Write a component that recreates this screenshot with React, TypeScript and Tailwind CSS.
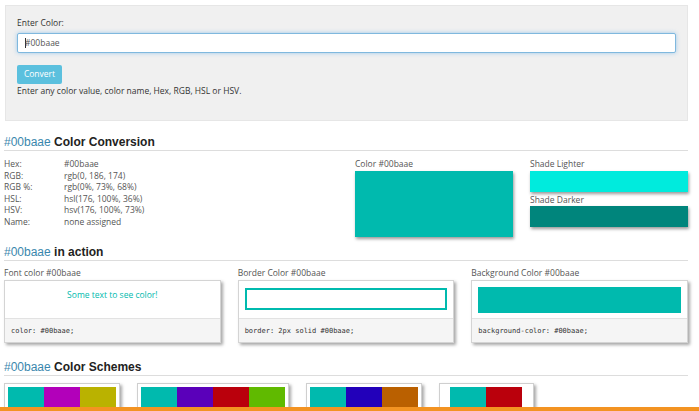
import type { ReactNode } from "react";

const HEX = "#00baae";

function Heading({ children }: { children: ReactNode }) {
  return (
    <h2 className="border-b border-[#dddddd] pb-[1px] font-['Liberation_Sans',Arial,sans-serif] text-[12px] leading-[14px] text-[#222]">
      <span className="text-[#3a87ad]">{HEX}</span> <b>{children}</b>
    </h2>
  );
}

function ActionCard({ title, code, children }: { title: string; code: string; children: ReactNode }) {
  return (
    <div>
      <div className="leading-[12px]">{title}</div>
      <div className="mt-[1px] border border-[#d4d4d4] bg-white shadow-[2px_2px_3px_rgba(0,0,0,0.35)]">
        <div className="h-[37px]">{children}</div>
        <div className="h-[24px] border-t border-[#e2e2e2] bg-[#f5f5f5] px-[6px] font-['DejaVu_Sans_Mono',monospace] text-[7px] leading-[24px] text-[#333]">
          {code}
        </div>
      </div>
    </div>
  );
}

function Scheme({ colors, className = "" }: { colors: string[]; className?: string }) {
  return (
    <div className={`flex h-[40px] border border-[#cfcfcf] bg-white pt-[3px] shadow-[2px_2px_3px_rgba(0,0,0,0.35)] ${className}`}>
      {colors.map((c) => (
        <div key={c} className="h-full w-[36px]" style={{ backgroundColor: c }} />
      ))}
    </div>
  );
}

const rows: [string, string][] = [
  ["Hex:", "#00baae"],
  ["RGB:", "rgb(0, 186, 174)"],
  ["RGB %:", "rgb(0%, 73%, 68%)"],
  ["HSL:", "hsl(176, 100%, 36%)"],
  ["HSV:", "hsv(176, 100%, 73%)"],
  ["Name:", "none assigned"],
];

export default function App() {
  return (
    <div className="relative h-[411px] w-[699px] overflow-hidden bg-white font-['Open_Sans',sans-serif] text-[8.5px] text-[#555]">
      <div className="pl-[4px] pr-[11px]">
        {/* input panel */}
        <div className="ml-[1px] mt-[5px] h-[116px] border border-[#e6e6e6] bg-[#f0f0f0] px-[11px] pt-[11px]">
          <div className="leading-[12px] text-[#333]">Enter Color:</div>
          <div className="mt-[4px] flex h-[20px] items-center rounded-[2px] border border-[#7fb8de] bg-white px-[7px] text-[#555] shadow-[0_0_4px_rgba(102,175,233,0.6)]">
            <span className="mr-[-1px] h-[10px] w-px bg-[#333]" />
            {HEX}
          </div>
          <button className="mt-[12px] h-[19px] w-[45px] rounded-[2px] bg-[#5bc0de] text-[8.5px] text-white">Convert</button>
          <div className="mt-[1px] leading-[12px] text-[#333]">Enter any color value, color name, Hex, RGB, HSL or HSV.</div>
        </div>

        <div className="mt-[14px]">
          <Heading>Color Conversion</Heading>
        </div>
        <div className="mt-[7px] flex">
          <div className="w-[351px] leading-[11.6px]">
            {rows.map(([k, v]) => (
              <div key={k} className="flex">
                <span className="w-[60px]">{k}</span>
                <span>{v}</span>
              </div>
            ))}
          </div>
          <div className="w-[158px]">
            <div className="leading-[12px]">Color {HEX}</div>
            <div className="mt-[1px] h-[66px] bg-[#00baae] shadow-[1px_2px_3px_rgba(0,0,0,0.4)]" />
          </div>
          <div className="ml-[17px] w-[158px]">
            <div className="leading-[12px]">Shade Lighter</div>
            <div className="mt-[1px] h-[21px] bg-[#00ebdd] shadow-[1px_2px_3px_rgba(0,0,0,0.4)]" />
            <div className="mt-[2px] leading-[12px]">Shade Darker</div>
            <div className="h-[21px] bg-[#00857c] shadow-[1px_2px_3px_rgba(0,0,0,0.4)]" />
          </div>
        </div>

        <div className="mt-[8px]">
          <Heading>in action</Heading>
        </div>
        <div className="mt-[6px] grid grid-cols-3 gap-[17px]">
          <ActionCard title={`Font color ${HEX}`} code={`color: ${HEX};`}>
            <div className="pt-[8px] text-center text-[#00baae]">Some text to see color!</div>
          </ActionCard>
          <ActionCard title={`Border Color ${HEX}`} code={`border: 2px solid ${HEX};`}>
            <div className="px-[6px] pt-[7px]">
              <div className="h-[22px] border-2 border-[#00baae]" />
            </div>
          </ActionCard>
          <ActionCard title={`Background Color ${HEX}`} code={`background-color: ${HEX};`}>
            <div className="px-[6px] pt-[6px]">
              <div className="h-[26px] bg-[#00baae]" />
            </div>
          </ActionCard>
        </div>

        <div className="mt-[17px]">
          <Heading>Color Schemes</Heading>
        </div>
        <div className="mt-[7px] flex">
          <Scheme className="w-[116px] pl-[3px]" colors={["#00baae", "#b200ba", "#bab200"]} />
          <Scheme className="ml-[17px] w-[152px] pl-[3px]" colors={["#00baae", "#5a00ba", "#ba000c", "#60ba00"]} />
          <Scheme className="ml-[17px] w-[116px] pl-[3px]" colors={["#00baae", "#2200ba", "#ba6000"]} />
          <Scheme className="ml-[17px] w-[95px] pl-[10px]" colors={["#00baae", "#ba000c"]} />
        </div>
      </div>
      <div className="absolute bottom-0 left-0 h-[4px] w-full bg-[#f39322]" />
    </div>
  );
}
